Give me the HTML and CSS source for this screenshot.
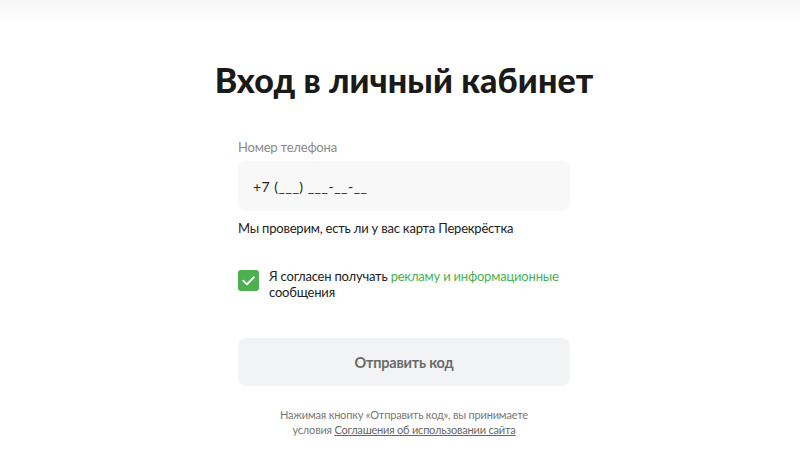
FILE: index.html
```html
<!DOCTYPE html>
<html lang="ru">
<head>
<meta charset="utf-8">
<title>Вход в личный кабинет</title>
<link rel="stylesheet" href="styles.css">
</head>
<body>
<div class="topbar"></div>
<main class="login">
  <h1 class="login-title">Вход в личный кабинет</h1>
  <form class="login-form">
    <label class="field-label" for="phone">Номер телефона</label>
    <div class="field">
      <input id="phone" class="field-input" type="text" value="+7 (___) ___-__-__">
    </div>
    <p class="hint">Мы проверим, есть ли у вас карта Перекрёстка</p>
    <label class="consent">
      <span class="checkbox">
        <svg viewBox="0 0 22 22" width="22" height="22"><path d="M5.5 11.2l3.8 3.8 7.2-7.4" fill="none" stroke="#fff" stroke-width="2" stroke-linecap="round" stroke-linejoin="round"/></svg>
      </span>
      <span class="consent-text">Я согласен получать <a class="link-green" href="#">рекламу и информационные</a> сообщения</span>
    </label>
    <button class="submit" type="button">Отправить код</button>
    <p class="terms">Нажимая кнопку «Отправить код», вы принимаете<br>условия <a class="terms-link" href="#">Соглашения об использовании сайта</a></p>
  </form>
</main>
</body>
</html>
```
FILE: styles.css
```css
* { box-sizing: border-box; }
html, body { margin: 0; padding: 0; background: #fff; }
body {
  font-family: "Lato", "Open Sans", sans-serif;
  color: #222;
  width: 800px;
  height: 464px;
  overflow: hidden;
}
.topbar {
  height: 24px;
  background: linear-gradient(#f6f6f6 0, #fbfbfb 45%, #fff 100%);
}
.login {
  display: flex;
  flex-direction: column;
  align-items: center;
}
.login-title {
  margin: 35px 0 0 8px;
  font-size: 34px;
  font-weight: 900;
  letter-spacing: 0.1px;
  color: #1a1a1a;
  line-height: 42px;
}
.login-form {
  width: 332px;
  margin-top: 38px;
  display: flex;
  flex-direction: column;
  margin-left: 8px;
}
.field-label {
  font-size: 13px;
  color: #8a8a8a;
  line-height: 16px;
  letter-spacing: -0.2px;
}
.field {
  margin-top: 6px;
  height: 50px;
  border-radius: 8px;
  background: #f8f8f8;
  display: flex;
  align-items: center;
}
.field-input {
  border: 0;
  background: transparent;
  font: inherit;
  font-size: 14px;
  letter-spacing: 0.5px;
  color: #222;
  padding: 0 15px;
  width: 100%;
  outline: none;
}
.hint {
  margin: 9px 0 0;
  font-size: 13px;
  line-height: 16px;
  letter-spacing: -0.2px;
  color: #222;
}
.consent {
  margin-top: 32px;
  display: flex;
  align-items: flex-start;
  gap: 10px;
}
.checkbox {
  flex: none;
  width: 21px;
  height: 21px;
  margin-top: 2px;
  border-radius: 3px;
  background: #4caf50;
  display: flex;
  align-items: center;
  justify-content: center;
}
.checkbox svg { width: 21px; height: 21px; }
.consent-text {
  font-size: 13px;
  line-height: 16px;
  letter-spacing: -0.2px;
  color: #222;
}
.link-green { color: #4caf50; text-decoration: none; }
.submit {
  margin-top: 38px;
  height: 48px;
  border: 0;
  border-radius: 8px;
  background: #f2f3f5;
  font: inherit;
  font-size: 14.5px;
  font-weight: 700;
  letter-spacing: -0.2px;
  color: #6a6a6a;
}
.terms {
  margin: 21px 0 0;
  text-align: center;
  font-size: 11px;
  line-height: 15px;
  letter-spacing: -0.2px;
  color: #777;
}
.terms-link { color: #666; text-decoration: underline; }
```
